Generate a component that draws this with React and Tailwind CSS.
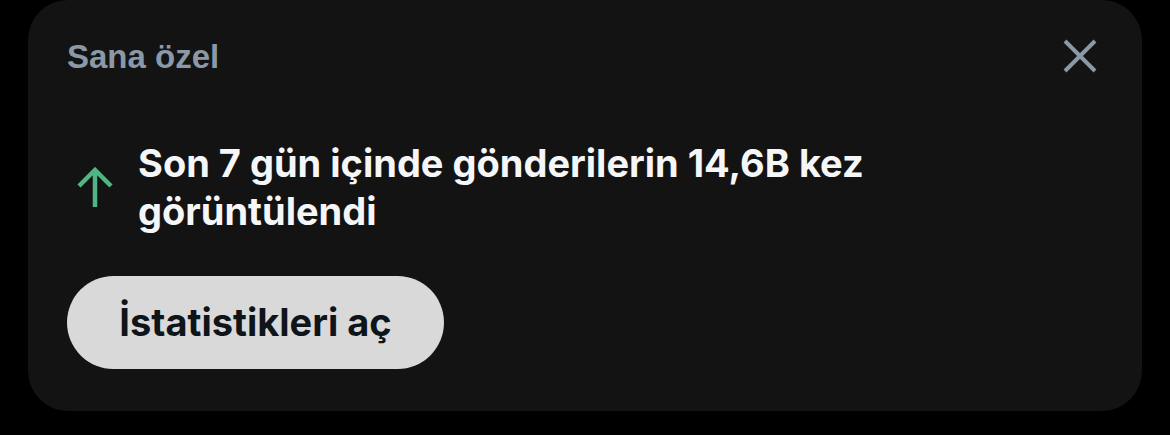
export default function App() {
  return (
    <div className="w-[1170px] h-[435px] bg-black overflow-hidden">
      <div className="ml-[28px] w-[1114px] h-[411px] rounded-[40px] bg-[#131313] pl-[39px] pr-[45px] pt-[39px] flex flex-col">
        <div className="flex items-center justify-between h-[34px]">
          <span
            className="text-[33px] leading-none font-bold text-[#8b98a5]"
            style={{ fontFamily: '"Liberation Sans", Arial, sans-serif' }}
          >
            Sana özel
          </span>
          <svg width="34" height="34" viewBox="0 0 34 34" fill="none">
            <path d="M2 2 L32 32 M32 2 L2 32" stroke="#8b98a5" strokeWidth="4" strokeLinecap="butt" />
          </svg>
        </div>
        <div
          className="mt-[66px] flex items-center"
          style={{ fontFamily: 'Inter, "Noto Sans", sans-serif' }}
        >
          <svg className="ml-[10px] shrink-0" width="36" height="40" viewBox="0 0 36 40" fill="none">
            <path d="M18 3 V40 M2 19 L18 3 L34 19" stroke="#4fb582" strokeWidth="4.5" />
          </svg>
          <div className="ml-[25px] text-[38px] leading-[48px] font-bold text-[#f5f6f7]">
            Son 7 gün içinde gönderilerin 14,6B kez
            <br />
            görüntülendi
          </div>
        </div>
        <div
          className="mt-[41px] w-[377px] h-[93px] rounded-full bg-[#d9d9d9] flex items-center justify-center text-[38px] font-bold text-[#0f1419]"
          style={{ fontFamily: 'Inter, "Noto Sans", sans-serif' }}
        >
          İstatistikleri aç
        </div>
      </div>
    </div>
  );
}
